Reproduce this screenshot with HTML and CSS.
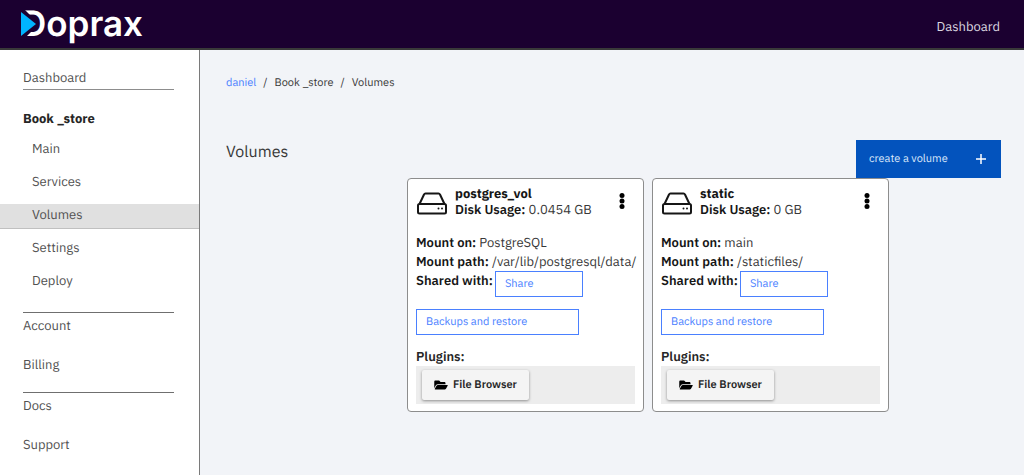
FILE: index.html
```
<!DOCTYPE html>
<html lang="en">
<head>
<meta charset="utf-8">
<meta name="viewport" content="width=device-width, initial-scale=1">
<title>Volumes - Doprax</title>
<link rel="stylesheet" href="styles.css">
</head>
<body>
<svg class="sprite" aria-hidden="true">
  <symbol id="drive" viewBox="0 0 30 24">
    <path d="M2.5 12 7 2.5Q7.400 1.500 8.500 1.500H21.500Q22.600 1.500 23 2.500L27.500 12" fill="none" stroke="#161616" stroke-width="2"/>
    <rect x="1" y="12" width="28" height="9.500" rx="1.500" fill="none" stroke="#161616" stroke-width="2"/>
    <circle cx="21.500" cy="16.500" r="1" fill="#161616"/>
    <circle cx="25" cy="16.500" r="1" fill="#161616"/>
  </symbol>
  <symbol id="dots" viewBox="0 0 6 18">
    <circle cx="3" cy="3.500" r="2.500"/><circle cx="3" cy="9" r="2.500"/><circle cx="3" cy="14.500" r="2.500"/>
  </symbol>
  <symbol id="folder" viewBox="0 0 576 512">
    <path d="M572.694 292.093L500.270 416.248A63.997 63.997 0 0 1 444.989 448H45.025c-18.523 0-30.064-20.093-20.731-36.093l72.424-124.155A64 64 0 0 1 152 256h399.964c18.523 0 30.064 20.093 20.730 36.093zM152 224h328v-48c0-26.510-21.490-48-48-48H272l-64-64H48C21.490 64 0 85.490 0 112v278.046l69.077-118.418C86.214 242.250 117.989 224 152 224z"/>
  </symbol>
</svg>
<header class="topbar">
  <a class="logo" href="#" aria-label="Doprax">
    <span class="logo-text">Doprax</span>
    <svg class="logo-mark" viewBox="0 0 20 28" aria-hidden="true"><path class="logo-gap" d="M0 0H5L19 14 5 28H0z"/><path class="logo-arrow" d="M1 2 16 14 1 26z"/></svg>
  </a>
  <a class="top-link" href="#">Dashboard</a>
</header>
<div class="layout">
  <nav class="sidebar" aria-label="Main">
    <div class="group first"><a href="#">Dashboard</a></div>
    <a class="project" href="#">Book _store</a>
    <ul class="menu">
      <li><a href="#">Main</a></li>
      <li><a href="#">Services</a></li>
      <li><a class="active" href="#" aria-current="page">Volumes</a></li>
      <li><a href="#">Settings</a></li>
      <li><a href="#">Deploy</a></li>
    </ul>
    <div class="group"><a href="#">Account</a><a href="#">Billing</a></div>
    <div class="group"><a href="#">Docs</a><a href="#">Support</a></div>
  </nav>
  <main class="content">
    <nav class="crumbs" aria-label="Breadcrumb"><a href="#">daniel</a><span>/</span><span>Book _store</span><span>/</span><span>Volumes</span></nav>
    <div class="heading">
      <h1>Volumes</h1>
      <button class="create" type="button">create a volume
        <svg width="12" height="12" viewBox="0 0 12 12" aria-hidden="true"><path d="M6 1v10M1 6h10" stroke="#fff" stroke-width="1.500"/></svg>
      </button>
    </div>
    <div class="cards">
      <article class="card">
        <div class="card-head">
          <svg class="drive" aria-hidden="true"><use href="#drive"/></svg>
          <div class="summary"><h2>postgres_vol</h2><p><b>Disk Usage:</b> 0.0454 GB</p></div>
          <button class="more" type="button" aria-label="More options"><svg width="6" height="18"><use href="#dots"/></svg></button>
        </div>
        <div class="details">
          <p><b>Mount on:</b> PostgreSQL</p>
          <p><b>Mount path:</b> /var/lib/postgresql/data/</p>
          <div class="shared"><b>Shared with:</b><button class="outline share" type="button">Share</button></div>
        </div>
        <button class="outline backups" type="button">Backups and restore</button>
        <h3>Plugins:</h3>
        <div class="plugins"><button class="plugin" type="button"><svg width="14" height="12" aria-hidden="true"><use href="#folder"/></svg>File Browser</button></div>
      </article>
      <article class="card">
        <div class="card-head">
          <svg class="drive" aria-hidden="true"><use href="#drive"/></svg>
          <div class="summary"><h2>static</h2><p><b>Disk Usage:</b> 0 GB</p></div>
          <button class="more" type="button" aria-label="More options"><svg width="6" height="18"><use href="#dots"/></svg></button>
        </div>
        <div class="details">
          <p><b>Mount on:</b> main</p>
          <p><b>Mount path:</b> /staticfiles/</p>
          <div class="shared"><b>Shared with:</b><button class="outline share" type="button">Share</button></div>
        </div>
        <button class="outline backups" type="button">Backups and restore</button>
        <h3>Plugins:</h3>
        <div class="plugins"><button class="plugin" type="button"><svg width="14" height="12" aria-hidden="true"><use href="#folder"/></svg>File Browser</button></div>
      </article>
    </div>
  </main>
</div>
</body>
</html>
```
FILE: styles.css
```
* { box-sizing: border-box; }
body {
  display: flex;
  flex-direction: column;
  min-height: 100vh;
  margin: 0;
  background: #f2f4f8;
  color: #161616;
  font: 13px/19px "IBM Plex Sans", Roboto, sans-serif;
  text-rendering: geometricPrecision;
}
a { color: inherit; text-decoration: none; }
button { font: inherit; cursor: pointer; text-rendering: inherit; }
h1, h2, h3, p, ul { margin: 0; padding: 0; }
b, h2, h3 { font-weight: 600; }
.sprite { position: absolute; width: 0; height: 0; }

.topbar {
  display: flex;
  align-items: center;
  justify-content: space-between;
  height: 50px;
  padding: 0 24px 0 21px;
  background: #1b0030;
  border-bottom: 2px solid #393939;
}
.logo { position: relative; color: #fff; }
.logo-text { font: 600 35px/46px Inter, sans-serif; }
.logo-mark { position: absolute; top: 9px; left: -1px; width: 20px; height: 28px; }
.logo-gap { fill: #1b0030; }
.logo-arrow { fill: #00b4ff; }
.top-link { padding-top: 4px; color: #dcd8e0; }

.layout { display: flex; flex: 1; }
.sidebar {
  flex: 0 0 200px;
  padding-top: 18px;
  background: #fff;
  border-right: 1px solid #7a7a7a;
  color: #525252;
}
.group {
  display: flex;
  flex-direction: column;
  gap: 20px;
  margin: 0 25px 18px 23px;
  padding-top: 3px;
  border-top: 1px solid #6f6f6f;
}
.group.first { padding: 0 0 2px; margin-bottom: 19px; border-top: 0; border-bottom: 1px solid #8d8d8d; }
.project { display: block; margin: 0 23px 10px; color: #262626; font-weight: 700; }
.menu { display: flex; flex-direction: column; gap: 8px; margin-bottom: 17px; list-style: none; }
.menu a {
  display: block;
  height: 25px;
  padding-left: 32px;
  border-bottom: 1px solid transparent;
  line-height: 22px;
}
.menu .active { background: #e0e0e0; border-color: #c0c0c0; }

.content { flex: 1; min-width: 0; padding: 24px 23px 24px 26px; }
.crumbs { display: flex; gap: 7px; font-size: 11px; line-height: 18px; color: #393939; }
.crumbs a { color: #4a80ff; }
.heading { display: flex; justify-content: space-between; margin-top: 48px; }
h1 { color: #393939; font-size: 16px; font-weight: 400; line-height: 24px; }
.create {
  display: flex;
  align-items: center;
  justify-content: space-between;
  width: 145px;
  height: 38px;
  padding: 0 14px 0 13px;
  border: 0;
  background: #0353bd;
  color: #dce8fa;
  font-size: 11px;
}

.cards { display: flex; flex-wrap: wrap; justify-content: center; gap: 8px; padding-left: 69px; }
.card {
  width: 237px;
  padding: 7px 8px;
  background: #fff;
  border: 1px solid #8d8d8d;
  border-radius: 4px;
}
.card-head { display: flex; gap: 7px; margin-bottom: 15px; }
.drive { width: 30px; height: 24px; margin: 6px 1px 0; }
.summary { flex: 1; }
.summary, .summary h2 { font-size: 13px; line-height: 16px; }
.summary h2 { font-weight: 700; }
.more { align-self: center; height: 18px; padding: 0; margin: -3px 10px 0 0; border: 0; background: none; line-height: 0; }
.details { font-size: 13px; white-space: nowrap; }
.summary p, .details p { color: #393939; }
b { color: #161616; }
.shared { display: flex; gap: 2px; }
.outline {
  display: block;
  height: 26px;
  padding: 0 9px;
  border: 1px solid #4a80ff;
  background: #fff;
  color: #4a80ff;
  font-size: 11px;
  text-align: left;
}
.share { width: 88px; }
.backups { width: 163px; margin: 12px 0; }
h3 { color: #262626; font-size: 13px; }
.plugins { padding: 4px 6px; background: #ededed; }
.plugin {
  display: flex;
  align-items: center;
  gap: 5px;
  height: 30px;
  padding: 0 12px;
  border: 0;
  border-radius: 2px;
  background: #f4f4f4;
  box-shadow: 0 1px 3px #00000066;
  color: #262626;
  font-size: 11px;
  font-weight: 600;
}
```
